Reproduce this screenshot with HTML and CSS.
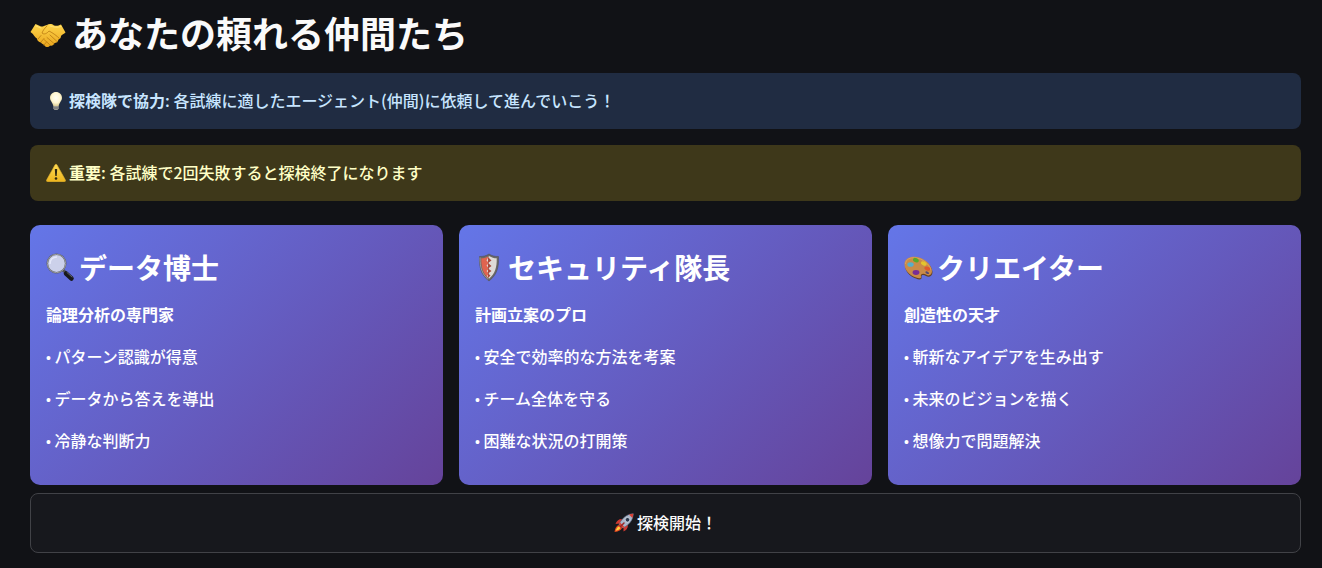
FILE: index.html
```html
<!DOCTYPE html>
<html lang="ja">
<head>
<meta charset="utf-8">
<meta name="viewport" content="width=device-width, initial-scale=1">
<title>あなたの頼れる仲間たち</title>
<link rel="stylesheet" href="styles.css">
</head>
<body>
<main class="page">
  <h1 class="title">
    <svg class="icon icon-title" viewBox="0 -8 36 36" aria-hidden="true">
      <defs><linearGradient id="skin" x1="0" y1="0" x2="0" y2="1"><stop offset="0" stop-color="#ffd54b"/><stop offset="1" stop-color="#e9a51d"/></linearGradient></defs>
      <path fill="url(#skin)" d="M5.5 2 L11 4.5 C13 5 14 3.5 17 3 C19 1.700 22 1.800 24 3.500 C27 4 28 4 31 2.500 L35.500 10.500 C34 12 32 12.500 31 14 C31 16 30 17 28.500 17.500 C28 20 26.500 21 24.500 21 C23.500 23.500 22 24 20 23.500 C18.500 25.500 16 25.500 14.500 23.500 C13 22 12 22 11 20.500 C8.500 20 7 18.500 7 16.500 C4.500 15 4 12.500 .5 10 Z"/>
      <path fill="none" stroke="#b97a12" stroke-width=".8" stroke-linecap="round" d="M17 4 C14 7 13 8.500 12 11 C14 13 17 11.500 19 9 C23 11 27 14 29.500 16.500 M20 13 L27 19.500 M17 15.500 L24 21.500 M14 17.500 L19.500 22.500 M8 17 L11 13.500 M11 20 L14 16.500 M14 23 L16.500 20"/>
      <path fill="none" stroke="#ffe47b" stroke-width="1" stroke-linecap="round" d="M6 4 L11 6 M20 4 C24 5 27 6 31 4.500"/>
    </svg>
    <span>あなたの頼れる仲間たち</span>
  </h1>

  <p class="alert alert-info">
    <svg class="icon icon-text" viewBox="0 -1 20 20" aria-hidden="true">
      <defs><radialGradient id="bulb" cx=".5" cy=".42" r=".6"><stop offset="0" stop-color="#fffef4"/><stop offset=".6" stop-color="#fff6d2"/><stop offset="1" stop-color="#d8c98f"/></radialGradient></defs>
      <path fill="url(#bulb)" d="M10 1 C6.500 1 4 3.500 4 6.800 C4 10 6.800 11.500 7.300 15 H12.700 C13.200 11.500 16 10 16 6.800 C16 3.500 13.500 1 10 1Z"/>
      <path fill="#a6a59b" d="M7.300 15 H12.700 V17.500 L11.500 19 H8.500 L7.300 17.500Z"/>
      <path stroke="#65666a" stroke-width=".7" d="M7.400 16.300 H12.600 M7.700 17.700 H12.300"/>
    </svg>
    <span><strong>探検隊で協力</strong>: 各試練に適したエージェント(仲間)に依頼して進んでいこう！</span>
  </p>

  <p class="alert alert-warning">
    <svg class="icon icon-text" viewBox="0 -1 20 20" aria-hidden="true">
      <defs><linearGradient id="warn" x1="0" y1="0" x2="0" y2="1"><stop offset="0" stop-color="#ffdc55"/><stop offset="1" stop-color="#edb51d"/></linearGradient></defs>
      <path fill="url(#warn)" stroke="#e3b32d" stroke-width=".6" stroke-linejoin="round" d="M9.100 1.700 Q10 .6 10.900 1.700 L19.400 17 Q19.900 18.500 18.400 18.700 H1.600 Q.1 18.500 .6 17Z"/>
      <path fill="#2d2711" d="M8.800 6 H11.200 L10.700 13 H9.300Z"/><circle cx="10" cy="15.500" r="1.300" fill="#2d2711"/>
    </svg>
    <span><strong>重要</strong>: 各試練で2回失敗すると探検終了になります</span>
  </p>

  <section class="cards">
    <article class="card">
      <h2 class="card-title">
        <svg class="icon icon-card" viewBox="0 -1 30 30" aria-hidden="true">
          <path stroke="#555759" stroke-width="3" d="M17 17 L21 21"/>
          <path stroke="#18191c" stroke-width="4.500" stroke-linecap="round" d="M20 20.500 L25.500 25.500"/>
          <path stroke="#60646a" stroke-width="1" stroke-linecap="round" d="M21 19.500 L26 24"/>
          <circle cx="10.500" cy="10.500" r="9.200" fill="#ccd1ea" stroke="#55585e" stroke-width="1.600"/>
          <circle cx="10.500" cy="10.500" r="9.200" fill="none" stroke="#b4b6bb" stroke-width=".7"/>
          <path fill="none" stroke="#e6e9fa" stroke-width="1.500" d="M4 11 C4 6.500 7 4 11 4"/>
        </svg>
        <span>データ博士</span>
      </h2>
      <p class="role">論理分析の専門家</p>
      <p class="trait"><span class="bullet">•</span> パターン認識が得意</p>
      <p class="trait"><span class="bullet">•</span> データから答えを導出</p>
      <p class="trait"><span class="bullet">•</span> 冷静な判断力</p>
    </article>

    <article class="card">
      <h2 class="card-title">
        <svg class="icon icon-card" viewBox="0 -1 30 30" aria-hidden="true">
          <path fill="#696866" stroke="#4f4c4a" stroke-width=".5" d="M14 1 C11 3 8 3.500 4.500 3.500 C4 14 6 22 14 28 C22 22 24 14 23.500 3.500 C20 3.500 17 3 14 1Z"/>
          <path fill="#e0644f" d="M13 3.500 C11 4.700 9 5.200 6.300 5.300 C6 14 8 20.500 13 25Z"/>
          <path fill="#dedbd7" d="M14 3 C17 4.700 19 5.200 21.700 5.300 C22 14 20 21 14 25.800 L12 23 L14 20.500 L11.500 18 L14 15.500 L11.500 12.500 L14 10 L11.500 7.500Z"/>
          <path fill="#a9473b" d="M13 4 L16.500 7.500 L13 10Z M13 10 L16.500 13 L13 15.500Z M13 15.500 L16.500 18 L13 20.500Z M13 20.500 L15.500 22.500 L13 25Z"/>
          <path fill="none" stroke="#aba9a4" stroke-width=".8" d="M5 4.500 C5 15 7 21 13 26.300"/>
        </svg>
        <span>セキュリティ隊長</span>
      </h2>
      <p class="role">計画立案のプロ</p>
      <p class="trait"><span class="bullet">•</span> 安全で効率的な方法を考案</p>
      <p class="trait"><span class="bullet">•</span> チーム全体を守る</p>
      <p class="trait"><span class="bullet">•</span> 困難な状況の打開策</p>
    </article>

    <article class="card">
      <h2 class="card-title">
        <svg class="icon icon-card" viewBox="0 -1 30 30" aria-hidden="true">
          <path fill="#624123" d="M1 12 C1 6 6 4 11 4.500 C20 5 28 12 28.500 19 C28.500 23 25 25 22 23 C20 21.500 17 21.500 17.500 24 C18 27 15 27 12 25.500 C5 23 1 18 1 12Z"/>
          <path fill="#c98b48" d="M.5 11 C.5 5.500 6 3.500 11 3.800 C20 4.500 27.500 11 28 18 C28 22 25 23.500 22 21.500 C19.500 20 16 20.500 17 23.500 C17.500 26 14.500 25.500 12 24.500 C5 22 .5 17 .5 11Z"/>
          <path fill="none" stroke="#dfaa63" stroke-width=".7" d="M1.500 11 C2 6 6 4.500 11 4.800 C19 5.500 25 11 27 17"/>
          <ellipse cx="6.500" cy="11.500" rx="3.200" ry="2.300" fill="#56aeca"/>
          <ellipse cx="12" cy="7.200" rx="3" ry="2" transform="rotate(25 12 7)" fill="#54a92c"/>
          <ellipse cx="20" cy="10.500" rx="3" ry="1.900" transform="rotate(25 20 10)" fill="#e3c52d"/>
          <ellipse cx="23.500" cy="15.500" rx="3" ry="1.900" transform="rotate(20 23 15)" fill="#df592d"/>
          <ellipse cx="12" cy="19.500" rx="3.400" ry="2.400" fill="#782d96"/>
          <ellipse cx="23.500" cy="19.500" rx="2" ry="1.100" transform="rotate(25 23 19)" fill="#514978"/>
        </svg>
        <span>クリエイター</span>
      </h2>
      <p class="role">創造性の天才</p>
      <p class="trait"><span class="bullet">•</span> 斬新なアイデアを生み出す</p>
      <p class="trait"><span class="bullet">•</span> 未来のビジョンを描く</p>
      <p class="trait"><span class="bullet">•</span> 想像力で問題解決</p>
    </article>
  </section>

  <button class="start" type="button">
    <svg class="icon icon-text" viewBox="0 -1 20 20" aria-hidden="true">
      <path fill="#cf3931" d="M8 6 C4.500 6 2.500 8 1.500 11 L6 10.500Z M14 12 C14 15.500 12 17.500 9.500 18.500 L9.500 14Z"/>
      <path fill="#e84a22" d="M5 12 C2.500 12.500 1 15 .5 19 C5 18.500 7 17 8 15Z"/>
      <path fill="#ffd23f" d="M5 13.500 C3.500 14 2.300 15.500 1.800 17.800 C4.200 17.300 5.700 16.500 6.300 15Z"/>
      <path fill="#aab6ca" stroke="#626f86" stroke-width=".5" d="M19.300 .7 C12.500 1 8 5.200 5 11.500 L8.500 15 C15 12 19 7.500 19.300 .7Z"/>
      <path fill="#d64136" d="M19.300 .7 C17.700 .8 16.200 1.100 14.900 1.600 L18.400 5.100 C19 3.700 19.200 2.300 19.300 .7Z M6 9.500 L5 11.500 L8.500 15 L10.500 14Z"/>
      <circle cx="13.500" cy="6.800" r="2.300" fill="#28364c" stroke="#e1e6ed" stroke-width=".7"/>
      <path stroke="#9a2724" stroke-width="1.500" stroke-linecap="round" d="M6.500 13.500 L10 10"/>
    </svg>
    <span>探検開始！</span>
  </button>
</main>
</body>
</html>
```

FILE: styles.css
```css
* {
  box-sizing: border-box;
}

body {
  margin: 0;
  background: #111216;
  color: #fafafa;
  font-family: "Noto Sans CJK JP", "Noto Sans", sans-serif;
  font-size: 16px;
  font-weight: 500;
  line-height: 24px;
}

h1,
h2,
p {
  margin: 0;
}

.page {
  display: flex;
  flex-direction: column;
  padding: 6px 21px 15px 30px;
}

.icon {
  flex: none;
}

.icon-title {
  width: 36px;
  height: 36px;
}

.icon-text {
  width: 20px;
  height: 20px;
}

.icon-card {
  width: 30px;
  height: 30px;
}

.title {
  display: flex;
  align-items: center;
  gap: 6px;
  margin-bottom: 15px;
  font-size: 36px;
  font-weight: 700;
  line-height: 52px;
}

.alert {
  display: flex;
  align-items: center;
  gap: 3px;
  padding: 15px 16px 17px;
  border-radius: 8px;
}

.alert-info {
  margin-bottom: 16px;
  background: #202c42;
  color: #c7e5ff;
}

.alert-warning {
  margin-bottom: 24px;
  background: #3e381a;
  color: #ffffc6;
}

.cards {
  display: grid;
  grid-template-columns: repeat(3, 1fr);
  gap: 16px;
  margin-bottom: 8px;
}

.card {
  padding: 23px 16px 32px;
  border-radius: 10px;
  background: linear-gradient(135deg, #6476e8, #65439a);
  color: #fff;
}

.card-title {
  display: flex;
  align-items: center;
  gap: 3px;
  margin-bottom: 15px;
  font-size: 28px;
  font-weight: 700;
  line-height: 38px;
}

.role,
.trait {
  line-height: 26px;
}

.role {
  font-weight: 700;
}

.trait {
  margin-top: 16px;
}

.bullet {
  font-family: "Liberation Sans", sans-serif;
  font-size: 14px;
  line-height: 1;
}

.start {
  display: flex;
  align-items: center;
  justify-content: center;
  gap: 3px;
  width: 100%;
  padding: 16px 12px 18px;
  border: 1px solid #414247;
  border-radius: 8px;
  background: #17181d;
  color: #fafafa;
  font: inherit;
  cursor: pointer;
}
```
